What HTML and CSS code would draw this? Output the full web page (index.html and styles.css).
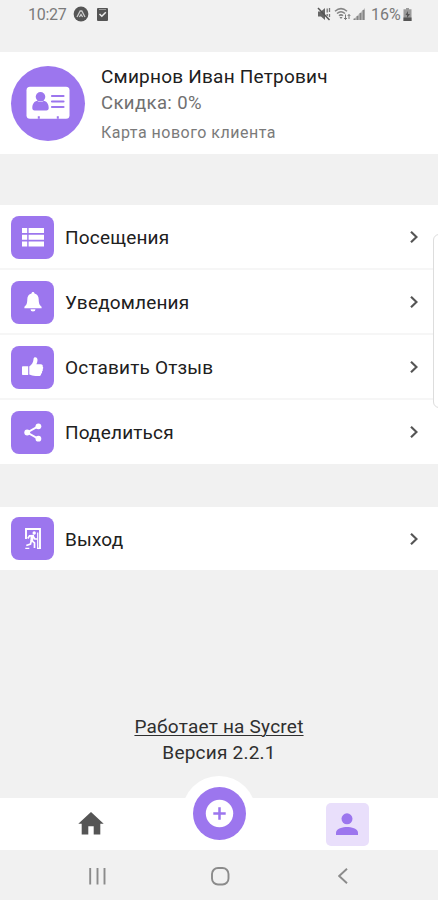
FILE: index.html
```html
<!DOCTYPE html>
<html lang="ru">
<head>
<meta charset="utf-8">
<title>Профиль</title>
<link rel="stylesheet" href="styles.css">
</head>
<body>
<div class="screen">
  <header class="status">
    <span class="clock">10:27</span>
    <svg class="st-app" width="16" height="16" viewBox="0 0 16 16"><circle cx="8" cy="8" r="7.4" fill="#555"/><path d="M4 11 7.2 5h1.6L12 11M6.4 11 8 8.5 9.600 11" fill="none" stroke="#ccc" stroke-width="1.300"/></svg>
    <svg class="st-check" width="11" height="13" viewBox="0 0 11 13"><rect width="11" height="13" rx="1" fill="#555"/><path d="M2.500 6 4.800 8.300 8.800 4.300" fill="none" stroke="#eee" stroke-width="1.500"/><path d="M2 1.500h7" stroke="#999"/></svg>
    <span class="grow"></span>
    <svg class="st-mute" width="14" height="14" viewBox="0 0 14 14"><path d="M1 4.500h3L8 1v12L4 9.500H1z" fill="#666"/><path d="M1 1 12.500 13" stroke="#555" stroke-width="1.500"/><path d="M10.200 1.500v4M12.500 1v4M12.500 7v3M10.200 7v2" stroke="#777" stroke-width="1.300"/></svg>
    <svg class="st-wifi" width="17" height="14" viewBox="0 0 17 14"><path d="M1 4.200Q7 -1 13 4.200M3 6.500Q7 3 11 6.500M5 8.800Q7 7 9 8.800" fill="none" stroke="#858585" stroke-width="1.500"/><path d="M7 12 5.500 10h3z" fill="#777"/><path d="M11.500 7.500v5M10 11l1.500 1.500L13 11M15 12V7.500M13.700 9 15 7.500 16.300 9" fill="none" stroke="#777"/></svg>
    <svg class="st-signal" width="12" height="12" viewBox="0 0 12 12"><path d="M0 12 12 0v12z" fill="#bbb"/><path d="M1.500 12v-1.500M4.500 12V8M7.500 12V5M10.500 12V2" stroke="#858585" stroke-width="1.700"/></svg>
    <span class="percent">16%</span>
    <svg class="st-batt" width="9" height="13" viewBox="0 0 9 13"><path d="M3 0h3v1.300h2.500V13H.5V1.300H3z" fill="#9a9a9a"/><path d="M.5 9.500h8V13h-8zM5 3 2.500 7H4v3l3-4H5z" fill="#555"/></svg>
  </header>

  <section class="profile">
    <div class="avatar">
      <svg width="44" height="34" viewBox="0 0 44 34"><rect x=".5" y=".8" width="43" height="32" rx="3.500" fill="#fff"/><circle cx="14.500" cy="10.800" r="4.800" fill="#9c76ee"/><path d="M6.300 22c0-4.300 2.200-7 5-7 2 1.200 4.400 1.200 6.400 0 2.800 0 5 2.700 5 7 0 1.600-.8 2.500-2.300 2.500H8.600c-1.500 0-2.300-.9-2.300-2.500z" fill="#9c76ee"/><path d="M26 10h11.500M26 15.500h11.500M26 21h11.500" stroke="#9c76ee" stroke-width="2.200" stroke-linecap="round"/><path d="M11.800 32.800v-2.600h2v2.600zM30.800 32.800v-2.600h2v2.600z" fill="#9c76ee"/></svg>
    </div>
    <div class="who">
      <div class="name">Смирнов Иван Петрович</div>
      <div class="discount">Скидка: 0%</div>
      <div class="card-kind">Карта нового клиента</div>
    </div>
  </section>

  <nav class="menu">
    <a class="row"><span class="tile"><svg width="22" height="19" viewBox="0 0 22 19"><path d="M0 0h5.200v5H0zM6.600 0H22v5H6.600zM0 6.700h5.200v5H0zM6.600 6.700H22v5H6.600zM0 13.400h5.200v5H0zM6.600 13.400H22v5H6.600z" fill="#fff"/></svg></span><span class="label">Посещения</span><svg class="chev" width="8" height="12" viewBox="0 0 8 12"><path d="M1 .8 6.500 6 1 11.200"/></svg></a>
    <a class="row"><span class="tile"><svg width="18" height="20" viewBox="0 0 18 20"><path d="M9 0c.9 0 1.500.6 1.500 1.500 2.700.7 4.200 3 4.200 5.800 0 4.500 1.100 6 2.900 7.500v1.400H.4v-1.400c1.800-1.500 2.900-3 2.900-7.500 0-2.800 1.500-5.100 4.200-5.800C7.500.6 8.100 0 9 0zM6.500 17.300h5A2.500 2.300 0 0 1 6.500 17.300z" fill="#fff"/></svg></span><span class="label">Уведомления</span><svg class="chev" width="8" height="12" viewBox="0 0 8 12"><path d="M1 .8 6.500 6 1 11.200"/></svg></a>
    <a class="row"><span class="tile"><svg width="22" height="20" viewBox="0 0 22 20"><path d="M.8 9.200h5.400V18H.8q-.8 0-.8-.8V10q0-.8.8-.8zM7.300 9.500c2.500-1.700 4-4.300 4.200-7.300C11.600.8 12.300.3 13.200.3c1.700 0 2.500 1.400 2.300 3.200-.1 1.300-.6 2.700-1.100 3.700h4.400c1.600 0 2.300 1.200 1.900 2.300.7.800.7 1.800 0 2.500.4 1 .1 1.900-.7 2.400.4 1-.1 1.900-.9 2.300.1 1.400-.8 2.300-2.400 2.300h-3.200c-2.600 0-4.200-.8-6.200-1.500z" fill="#fff"/></svg></span><span class="label">Оставить Отзыв</span><svg class="chev" width="8" height="12" viewBox="0 0 8 12"><path d="M1 .8 6.500 6 1 11.200"/></svg></a>
    <a class="row"><span class="tile"><svg width="18" height="19" viewBox="0 0 18 19"><path d="M14.500 3.200 3.300 9.500l11.200 6.300" fill="none" stroke="#fff" stroke-width="1.900"/><circle cx="14.400" cy="3.300" r="2.900" fill="#fff"/><circle cx="3.200" cy="9.500" r="2.900" fill="#fff"/><circle cx="14.400" cy="15.700" r="2.900" fill="#fff"/></svg></span><span class="label">Поделиться</span><svg class="chev" width="8" height="12" viewBox="0 0 8 12"><path d="M1 .8 6.500 6 1 11.200"/></svg></a>
  </nav>

  <nav class="menu exit">
    <a class="row"><span class="tile"><svg width="16" height="21" viewBox="0 0 16 21"><path d="M1 11V1h14v19.500" fill="none" stroke="#fff" stroke-width="1.900"/><path d="M12.700 4.500v16M.3 20.300h4M12 20.300h4" stroke="#fff" stroke-width="1.200"/><circle cx="9.200" cy="5" r="1.700" fill="#fff"/><path d="M2.800 10.500 4.500 7.800 8 7.700 6.500 12.500 9.500 14.800V20M6.300 12.800 5.500 16 1.300 17.500M8 8l1.800 3h2.500" fill="none" stroke="#fff" stroke-width="1.700"/><path d="M5.500 7.500h3.600L8 13.200H5.500z" fill="#fff"/></svg></span><span class="label">Выход</span><svg class="chev" width="8" height="12" viewBox="0 0 8 12"><path d="M1 .8 6.500 6 1 11.200"/></svg></a>
  </nav>

  <footer class="about">
    <a class="powered">Работает на Sycret</a>
    <div class="version">Версия 2.2.1</div>
  </footer>

  <nav class="tabs">
    <a class="tab home"><svg width="26" height="23" viewBox="0 0 26 23"><path d="M13 0 25.700 11.700H22.300V22.500H15.700V14.300H10.300V22.500H3.700V11.700H.3z" fill="#555"/></svg></a>
    <a class="add"><svg width="53" height="53" viewBox="0 0 53 53"><circle cx="26.500" cy="26.500" r="26.500" fill="#9c76ee"/><circle cx="26.500" cy="26.500" r="13.700" fill="#fff"/><path d="M26.500 20.300v12.400M20.300 26.500h12.400" stroke="#9c76ee" stroke-width="2.500"/></svg></a>
    <a class="tab"><span class="active"><svg width="22" height="22" viewBox="0 0 22 22"><circle cx="11" cy="5.800" r="5.500" fill="#9c76ee"/><path d="M0 22v-2.500C0 15.700 7 14 11 14s11 1.700 11 5.500V22z" fill="#9c76ee"/></svg></span></a>
  </nav>

  <div class="sysnav">
    <svg width="17" height="17" viewBox="0 0 17 17"><path d="M1.200 0v16.500M8.500 0v16.500M15.500 0v16.500"/></svg>
    <svg class="circle" width="19" height="19" viewBox="0 0 19 19"><rect x="1" y="1" width="16.500" height="16.500" rx="6"/></svg>
    <svg width="10" height="16" viewBox="0 0 10 16"><path d="M9 .8 1.200 8 9 15.200"/></svg>
  </div>
  <div class="edge-handle"></div>
</div>
</body>
</html>
```
FILE: styles.css
```css
* { box-sizing: border-box; }
body { margin: 0; background: #f1f1f1; font-family: Roboto, "Liberation Sans", sans-serif; color: #202020; }
svg { display: block; flex: none; }
.screen { position: relative; width: 438px; height: 900px; overflow: hidden; display: flex; flex-direction: column; }

.status { height: 52px; padding: 0 26px 24px 28px; display: flex; align-items: center; color: #7a7a7a; font-size: 16px; white-space: nowrap; }
.clock { width: 38px; letter-spacing: -.3px; }
.st-app { margin-left: 7px; }
.st-check { margin-left: 8px; }
.grow { flex: 1; }
.st-mute { margin-right: 3px; }
.st-signal { margin-left: 2px; }
.percent { margin-left: 6px; width: 30px; }
.st-batt { margin-left: 2px; }

.profile { height: 102px; background: #fff; padding: 0 11px; display: flex; align-items: center; }
.avatar { width: 74px; height: 75px; border-radius: 50%; background: #9c76ee; display: flex; align-items: center; justify-content: center; }
.who { margin-left: 16px; padding-top: 6px; white-space: nowrap; }
.name { font-size: 19px; line-height: 27px; letter-spacing: .22px; }
.discount { font-size: 18.5px; line-height: 27px; letter-spacing: .4px; color: #707070; }
.card-kind { font-size: 16px; line-height: 32px; letter-spacing: .5px; color: #7a7a7a; }

.menu { margin-top: 51px; background: #fff; }
.row { height: 65px; padding: 1px 20px 0 11px; display: flex; align-items: center; border-bottom: 2px solid #f6f6f6; }
.row:last-child { height: 64px; border-bottom: 0; padding-top: 0; }
.tile { width: 43px; height: 43px; border-radius: 8px; background: #9c76ee; display: flex; align-items: center; justify-content: center; }
.label { flex: 1; margin-left: 11px; padding-top: 1px; font-size: 19px; letter-spacing: .18px; white-space: nowrap; }
.chev { fill: none; stroke: #555; stroke-width: 2.2; }
.exit { margin-top: 43px; }
.exit .row:last-child { height: 63px; }

.about { flex: 1; padding-top: 144px; text-align: center; font-size: 19px; line-height: 26px; letter-spacing: .22px; color: #2f2f2f; }
.powered { text-decoration: underline; text-decoration-thickness: 1px; text-underline-offset: 2px; }

.tabs { height: 52px; background: #fff; display: grid; grid-template-columns: 182px 74px 182px; justify-items: center; align-items: center; }
.home { margin-top: -2px; }
.add { width: 74px; height: 74px; margin-top: -22px; border-radius: 50%; background: #fff; display: flex; align-items: center; justify-content: center; }
.active { width: 43px; height: 43px; border-radius: 5px; background: #e9dffb; display: flex; align-items: center; justify-content: center; }
.sysnav { height: 50px; padding: 2px 90px 0 89px; display: flex; align-items: center; justify-content: space-between; }
.sysnav svg { fill: none; stroke: #8b8b8b; stroke-width: 1.9; }
.sysnav .circle { margin-right: 4px; }

.edge-handle { position: absolute; top: 234px; right: -8px; width: 13px; height: 174px; border: 1.5px solid #ddd; border-radius: 6px; background: #fff; }
```
